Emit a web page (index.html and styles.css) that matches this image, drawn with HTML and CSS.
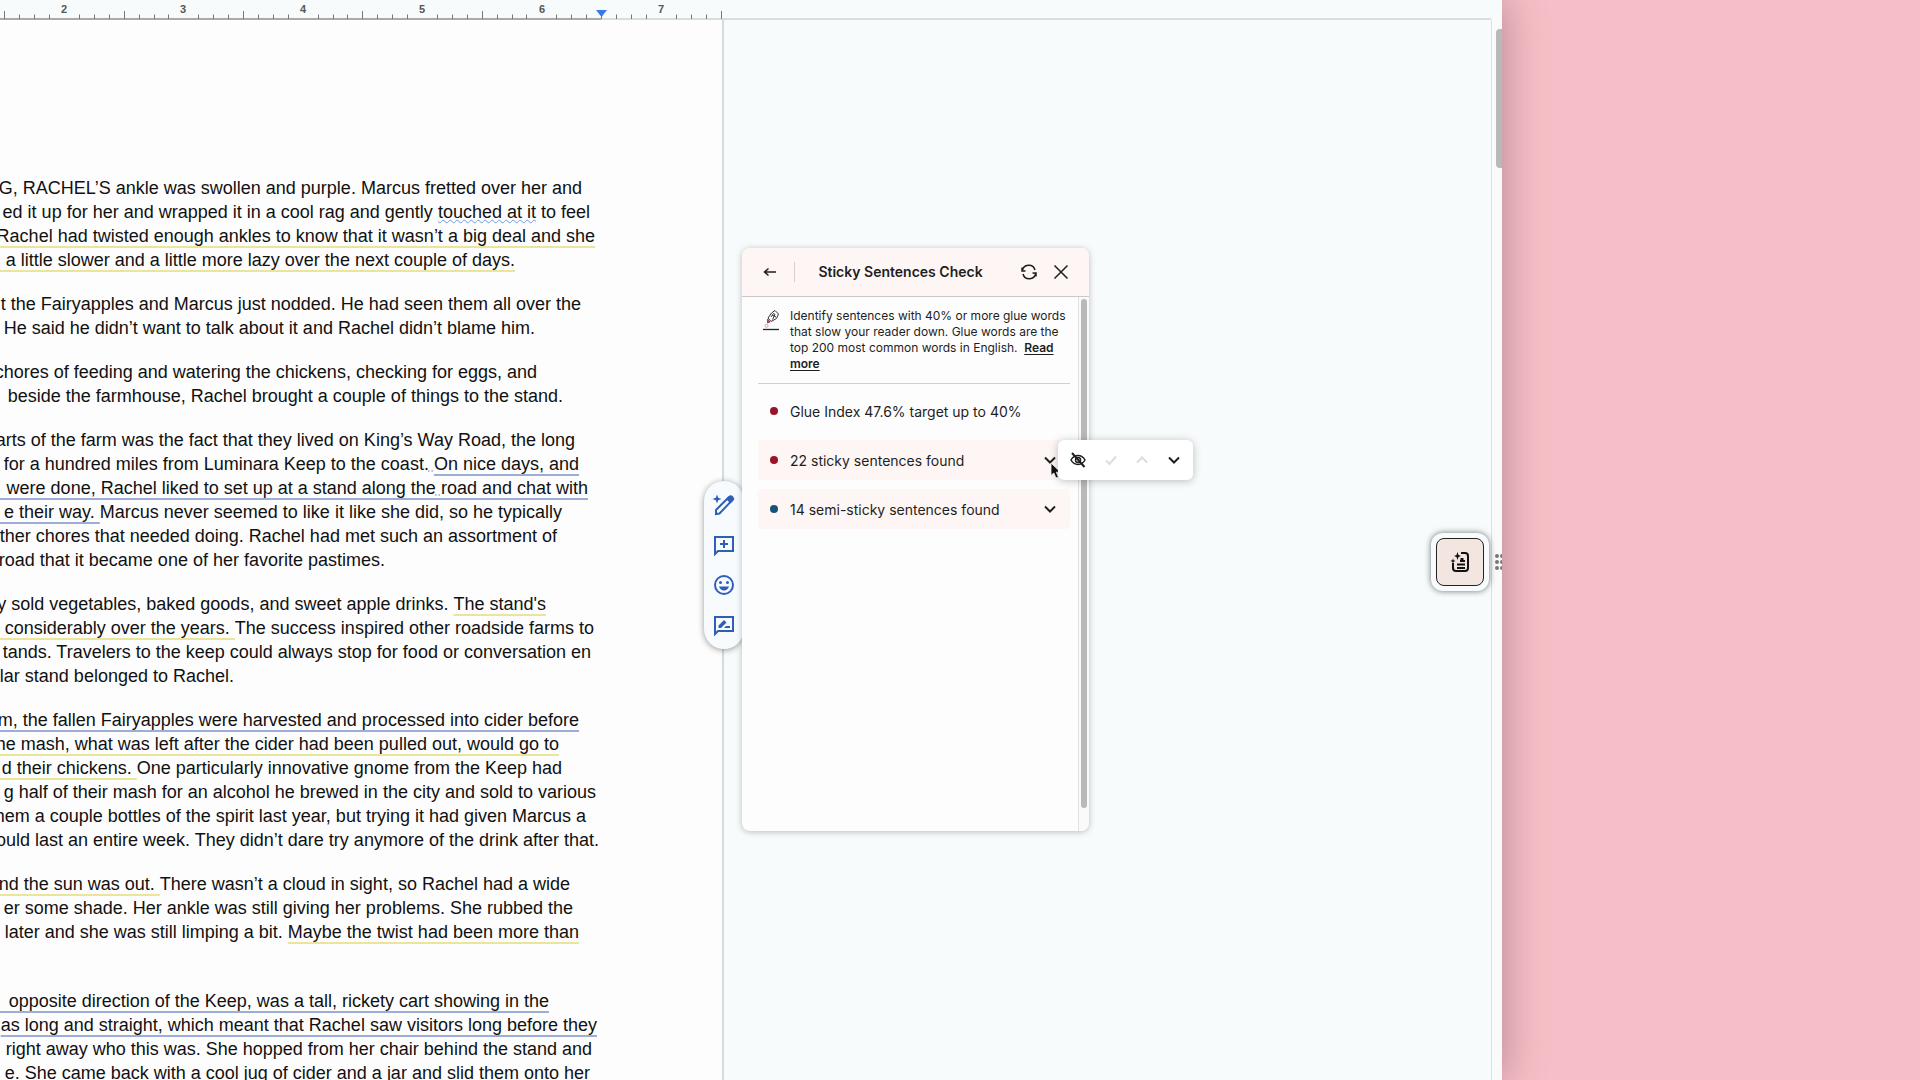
FILE: index.html
```html
<!DOCTYPE html>
<html lang="en">
<head>
<meta charset="utf-8">
<title>Sticky Sentences Check</title>
<link rel="stylesheet" href="styles.css">
</head>
<body>
<div class="window">
  <header class="ruler">
    <svg class="ruler-scale" width="723" height="20" viewBox="0 0 723 20" aria-hidden="true">
      <path class="ruler-text-area" d="M0 19H601"/>
      <path class="ruler-ticks" d="M4.500 11V19M124.500 11V19M243.500 11V19M362.500 11V19M482.500 11V19M601.500 14V19M721.500 11V19"/>
      <path class="ruler-ticks" d="M19.500 14.500V19M34.500 14.500V19M49.500 14.500V19M79.500 14.500V19M94.500 14.500V19M109.500 14.500V19M139.500 14.500V19M154.500 14.500V19M168.500 14.500V19M198.500 14.500V19M213.500 14.500V19M228.500 14.500V19M258.500 14.500V19M273.500 14.500V19M288.500 14.500V19M318.500 14.500V19M333.500 14.500V19M347.500 14.500V19M377.500 14.500V19M392.500 14.500V19M407.500 14.500V19M437.500 14.500V19M452.500 14.500V19M467.500 14.500V19M497.500 14.500V19M512.500 14.500V19M526.500 14.500V19M556.500 14.500V19M571.500 14.500V19M586.500 14.500V19M616.500 14.500V19M631.500 14.500V19M646.500 14.500V19M676.500 14.500V19M691.500 14.500V19M706.500 14.500V19"/>
      <g class="ruler-numbers">
        <text x="64" y="13">2</text><text x="183" y="13">3</text><text x="303" y="13">4</text><text x="422" y="13">5</text><text x="542" y="13">6</text><text x="661" y="13">7</text>
      </g>
      <path class="ruler-marker" d="M596 10H607L601.500 17Z"/>
    </svg>
  </header>
  <div class="workspace">
    <main class="canvas">
      <article class="page">
        <p><span class="line" style="width:585px">G, RACHEL’S ankle was swollen and purple. Marcus fretted over her and</span>
        <span class="line" style="width:593px">ed it up for her and wrapped it in a cool rag and gently <u class="squiggle">touched at it</u> to feel</span>
        <span class="line" style="width:598px"><mark class="sticky"> Rachel had twisted enough ankles to know that it wasn’t a big deal and she</mark></span>
        <span class="line" style="width:518px"><mark class="sticky">  a little slower and a little more lazy over the next couple of days.</mark></span></p>
        <p><span class="line" style="width:584px">t the Fairyapples and Marcus just nodded. He had seen them all over the</span>
        <span class="line" style="width:538px">He said he didn’t want to talk about it and Rachel didn’t blame him.</span></p>
        <p><span class="line" style="width:540px">chores of feeding and watering the chickens, checking for eggs, and</span>
        <span class="line" style="width:566px">beside the farmhouse, Rachel brought a couple of things to the stand.</span></p>
        <p><span class="line" style="width:578px">arts of the farm was the fact that they lived on King’s Way Road, the long</span>
        <span class="line" style="width:582px">for a hundred miles from Luminara Keep to the coast.<span class="hint"> </span><mark class="semi">On nice days, and</mark></span>
        <span class="line" style="width:591px"><mark class="semi">  were done, Rachel liked to set up at a stand along the<span class="hint"> </span>road and chat with</mark></span>
        <span class="line" style="width:565px"><mark class="semi"> e their way. </mark>Marcus never seemed to like it like she did, so he typically</span>
        <span class="line" style="width:560px">ther chores that needed doing. Rachel had met such an assortment of</span>
        <span class="line" style="width:388px">road that it became one of her favorite pastimes.</span></p>
        <p><span class="line" style="width:549px">y sold vegetables, baked goods, and sweet apple drinks. <mark class="sticky">The stand's</mark></span>
        <span class="line" style="width:597px"><mark class="sticky">  considerably over the years. </mark>The success inspired other roadside farms to</span>
        <span class="line" style="width:594px">tands. Travelers to the keep could always stop for food or conversation en</span>
        <span class="line" style="width:237px">lar stand belonged to Rachel.</span></p>
        <p><span class="line" style="width:582px"><mark class="semi">m, the fallen Fairyapples were harvested and processed into cider before</mark></span>
        <span class="line" style="width:562px"><mark class="sticky">he mash, what was left after the cider had been pulled out, would go to</mark></span>
        <span class="line" style="width:565px"><mark class="sticky"> d their chickens. </mark>One particularly innovative gnome from the Keep had</span>
        <span class="line" style="width:599px">g half of their mash for an alcohol he brewed in the city and sold to various</span>
        <span class="line" style="width:589px">hem a couple bottles of the spirit last year, but trying it had given Marcus a</span>
        <span class="line" style="width:602px">ould last an entire week. They didn’t dare try anymore of the drink after that.</span></p>
        <p class="runs-on"><span class="line" style="width:573px"><mark class="sticky">nd the sun was out. </mark>There wasn’t a cloud in sight, so Rachel had a wide</span>
        <span class="line" style="width:576px">er some shade. Her ankle was still giving her problems. She rubbed the</span>
        <span class="line" style="width:582px">later and she was still limping a bit. <mark class="sticky">Maybe the twist had been more than</mark></span></p>
        <p><span class="line" style="width:552px"><mark class="semi">  opposite direction of the Keep, was a tall, rickety cart showing in the</mark></span>
        <span class="line" style="width:600px"><mark class="semi">as long and straight, which meant that Rachel saw visitors long before they</mark></span>
        <span class="line" style="width:595px">right away who this was. She hopped from her chair behind the stand and</span>
        <span class="line" style="width:593px">e. She came back with a cool jug of cider and a jar and slid them onto her</span></p>
      </article>
    </main>
    <div class="gutter"><div class="gutter-thumb"></div></div>
  </div>

  <nav class="quick-tools" aria-label="Page tools">
    <button type="button" aria-label="Help me write"><svg width="24" height="24" viewBox="0 0 24 24"><path d="M5 1.500 6.200 4.800 9.500 6 6.200 7.200 5 10.500 3.800 7.200.500 6 3.800 4.800Z" fill="currentColor"/><path d="M4 21v-4L16.500 4.500q1.500-1.200 3 0t.200 3.200L7.500 20.500Z" fill="none" stroke="currentColor" stroke-width="2"/><path d="m14 6 3-3q2-1.500 4 .500t.500 4l-3 3Z" fill="currentColor"/></svg></button>
    <button type="button" aria-label="Add comment"><svg width="24" height="24" viewBox="0 0 24 24"><path d="M3 21V4h18v14H6Z" fill="none" stroke="currentColor" stroke-width="2"/><path d="M12 7v8M8 11h8" stroke="currentColor" stroke-width="2"/></svg></button>
    <button type="button" aria-label="Add emoji reaction"><svg width="24" height="24" viewBox="0 0 24 24"><circle cx="12" cy="12" r="9" fill="none" stroke="currentColor" stroke-width="2"/><circle cx="8.500" cy="9.500" r="1.500" fill="currentColor"/><circle cx="15.500" cy="9.500" r="1.500" fill="currentColor"/><path d="M7 13.500h10q-1.500 4-5 4t-5-4Z" fill="currentColor"/></svg></button>
    <button type="button" aria-label="Suggest edits"><svg width="24" height="24" viewBox="0 0 24 24"><path d="M3 21V4h18v14H6Z" fill="none" stroke="currentColor" stroke-width="2"/><path d="M6.500 15v-2.500l5.500-5.500 2.500 2.500L9 15ZM12 15l2-2h4v2Z" fill="currentColor"/></svg></button>
  </nav>

  <section class="panel" aria-label="Sticky Sentences Check">
    <header class="panel-head">
      <button type="button" aria-label="Back"><svg width="16" height="16" viewBox="0 0 16 16"><path d="M14 8H3M6.500 4.500 2.500 8l4 3.500" class="stroke"/></svg></button>
      <h1>Sticky Sentences Check</h1>
      <button type="button" aria-label="Refresh"><svg width="18" height="18" viewBox="0 0 18 18"><path d="M2 4.500V8h3.500M2.300 7.800A6.500 6.500 0 0 1 15 7M16 13.500V10h-3.500M15.700 10.200A6.500 6.500 0 0 1 3 11" class="stroke"/></svg></button>
      <button type="button" aria-label="Close"><svg width="18" height="18" viewBox="0 0 18 18"><path d="M2.500 2.500 15.500 15.500M15.500 2.500 2.500 15.500" class="stroke"/></svg></button>
    </header>
    <div class="panel-body">
      <div class="panel-content">
        <div class="intro">
          <svg width="18" height="22" viewBox="0 0 18 22" aria-hidden="true"><path d="M1 20.500H17" stroke="#222" stroke-width="1.300"/><path d="M6 9 9.500 4 13 1.500 16.500 5 14.500 9.500 9 12.500Z" fill="none" stroke="#333"/><path d="m9 8 2.500-3.500 1.500 1-2.500 5M10 6l4 2" fill="none" stroke="#333"/><path d="m5.500 10 2.500 3-2.500 1Z" fill="#a3455a" stroke="#a3455a"/><circle cx="4.500" cy="16.800" r="1.500" fill="none" stroke="#e09aa8"/></svg>
          <p>Identify sentences with 40% or more glue words that slow your reader down. Glue words are the top 200 most common words in English.&nbsp; <a href="#more">Read more</a></p>
        </div>
        <ul class="results">
          <li><i class="dot"></i>Glue Index 47.6% target up to 40%</li>
          <li><button type="button" class="result"><i class="dot"></i><span>22 sticky sentences found</span><svg width="16" height="16" viewBox="0 0 16 16"><path d="m3 5.500 5 5 5-5" class="stroke bold"/></svg></button></li>
          <li><button type="button" class="result"><i class="dot blue"></i><span>14 semi-sticky sentences found</span><svg width="16" height="16" viewBox="0 0 16 16"><path d="m3 5.500 5 5 5-5" class="stroke bold"/></svg></button></li>
        </ul>
      </div>
      <div class="panel-gutter"><div class="panel-thumb"></div></div>
    </div>
  </section>

  <svg class="pointer" width="12" height="18" viewBox="0 0 12 18" aria-hidden="true"><path d="M1 1v12.500l2.800-2.500 2.200 5 2.400-1L6.300 10.200H10.500Z" fill="#111" stroke="#fff" stroke-width=".8"/></svg>

  <div class="stepper" role="toolbar" aria-label="Result navigation">
    <button type="button" aria-label="Hide"><svg width="18" height="18" viewBox="0 0 18 18"><path d="M2 9q2.500-4.500 7-4.500T16 9q-2.500 4.500-7 4.500T2 9Z" class="stroke"/><circle cx="9" cy="9" r="2.500" class="stroke"/><path d="m3 2 12.500 14" class="stroke bold"/></svg></button>
    <button type="button" aria-label="Accept" disabled><svg width="16" height="16" viewBox="0 0 16 16"><path d="m3 8.500 3.500 3.500L13 4.500" class="stroke bold"/></svg></button>
    <button type="button" aria-label="Previous" disabled><svg width="16" height="16" viewBox="0 0 16 16"><path d="m3 10.500 5-5 5 5" class="stroke bold"/></svg></button>
    <button type="button" aria-label="Next"><svg width="16" height="16" viewBox="0 0 16 16"><path d="m3 5.500 5 5 5-5" class="stroke bold"/></svg></button>
  </div>

  <div class="launcher">
    <button type="button" aria-label="Open writing reports"><svg width="20" height="22" viewBox="0 0 20 22"><path d="M11 2h4q3 0 3 3v12q0 3-3 3H6q-3 0-3-3v-5M7 17h8M7 13.500h8M10 10h5" fill="none" stroke="#111" stroke-width="2"/><path d="M7.500 1 8.500 4 11 5 8.500 6 7.500 9 6.500 6 4 5 6.500 4ZM3 7.500l.700 1.800 1.800.700-1.800.700L3 12.500l-.700-1.800L.500 10l1.800-.700ZM10.500 7h3v2h-3Z" fill="#111"/></svg></button>
  </div>
  <svg class="grip" width="8" height="16" viewBox="0 0 8 16" aria-hidden="true"><g fill="#777"><circle cx="3" cy="2" r="2"/><circle cx="3" cy="8" r="2"/><circle cx="3" cy="14" r="2"/><circle cx="8" cy="2" r="2"/><circle cx="8" cy="8" r="2"/><circle cx="8" cy="14" r="2"/></g></svg>
</div>
</body>
</html>
```
FILE: styles.css
```css
* { box-sizing: border-box; }

body {
  margin: 0;
  height: 100vh;
  padding-right: 418px;
  overflow: hidden;
  background: #f6bec6;
  color: #1e1e1e;
  font-family: Inter, "Liberation Sans", sans-serif;
}

button {
  display: flex;
  align-items: center;
  justify-content: center;
  padding: 0;
  border: 0;
  background: none;
  color: inherit;
  font: inherit;
}

.window {
  position: relative;
  display: flex;
  flex-direction: column;
  height: 100%;
  background: #f7fbfc;
  box-shadow: 0 0 40px rgba(60, 30, 40, .35);
}

/* Ruler */
.ruler {
  height: 20px;
  margin-right: 11px;
  border-bottom: 2px solid #d9dddd;
}
.ruler-scale { display: block; }
.ruler-ticks { stroke: #777; fill: none; }
.ruler-text-area { stroke: #aaa; stroke-width: 2; }
.ruler-numbers {
  fill: #555;
  font: 700 11px "Liberation Sans", sans-serif;
  text-anchor: middle;
}
.ruler-marker { fill: #3b78e7; }

/* Document */
.workspace { display: flex; flex: 1; min-height: 0; }
.canvas {
  flex: 1;
  overflow: hidden;
  border-right: 1px solid #dcdfe3;
}
.page {
  width: 724px;
  min-height: 100%;
  padding-top: 156px;
  border-right: 2px solid #d7dadc;
  background: #fdfdfd;
  color: #111;
  font: 18px/24px "Liberation Sans", Arial, sans-serif;
}
.page p { margin: 0 0 20px -3px; }
.page .runs-on { padding-bottom: 25px; }
.line {
  display: flex;
  justify-content: flex-end;
  white-space: pre;
}
mark {
  background: none;
  color: inherit;
  text-decoration: underline 2px;
  text-decoration-skip-ink: none;
  text-underline-offset: 4px;
}
.sticky { text-decoration-color: #ebe59b; }
.semi { text-decoration-color: #9cadd8; }
.squiggle {
  text-decoration: underline wavy 1px #6f9ae0;
  text-decoration-skip-ink: none;
}
.hint {
  text-decoration: underline dotted 2px #b5c4e6;
  text-underline-offset: 0;
}

.gutter {
  display: flex;
  justify-content: flex-end;
  width: 10px;
  padding-top: 9px;
  background: #fafafa;
}
.gutter-thumb {
  width: 6px;
  height: 139px;
  border-radius: 4px 0 0 4px;
  background: #b9b9b9;
}

/* Floating page tools */
.quick-tools {
  position: absolute;
  left: 704px;
  top: 481px;
  display: flex;
  flex-direction: column;
  gap: 16px;
  padding: 12px 8px;
  border-radius: 20px;
  background: #f8fbfd;
  color: #2f5fb8;
  box-shadow: 0 1px 6px rgba(0, 0, 0, .4);
}

/* Check panel */
.panel {
  position: absolute;
  left: 742px;
  top: 248px;
  display: flex;
  flex-direction: column;
  width: 347px;
  height: 583px;
  overflow: hidden;
  border-radius: 8px;
  background: #fdfdfd;
  box-shadow: 0 1px 6px rgba(0, 0, 0, .25);
}
.stroke { fill: none; stroke: currentColor; stroke-width: 1.5; }
.bold { stroke-width: 2; }
.panel-head {
  display: flex;
  align-items: center;
  height: 49px;
  padding: 0 19px 0 20px;
  gap: 14px;
  border-bottom: 1px solid #ccc6c5;
  background: #fdf6f4;
}
.panel-head h1 {
  flex: 1;
  margin: 0 0 0 2px;
  border-left: 1px solid #d6cfce;
  font-size: 14px;
  line-height: 20px;
  font-weight: 600;
  text-align: center;
}
.panel-body { display: flex; flex: 1; }
.panel-content { flex: 1; padding: 11px 8px 0 16px; }
.intro {
  display: flex;
  gap: 10px;
  padding: 0 0 11px 4px;
  border-bottom: 1px solid #d0d0d0;
}
.intro svg { flex: none; margin-top: 1px; }
.intro p { margin: 0; font-size: 12px; line-height: 16px; }
.intro a { color: inherit; font-weight: 600; text-underline-offset: 2px; }
.results {
  display: flex;
  flex-direction: column;
  gap: 9px;
  margin: 7px 0 0;
  padding: 0;
  list-style: none;
  font-size: 14px;
}
.results li, .result {
  display: flex;
  align-items: center;
  width: 100%;
  height: 40px;
}
.result { padding-right: 12px; border-radius: 4px; background: #fdf6f4; }
.result span { flex: 1; text-align: left; }
.dot {
  flex: none;
  width: 8px;
  height: 8px;
  margin: 0 12px;
  border-radius: 50%;
  background: #981426;
}
.blue { background: #165379; }
.panel-gutter {
  width: 11px;
  padding: 2px 2px 23px;
  border-left: 1px solid #e2e2e2;
  background: #fafafa;
}
.panel-thumb { height: 100%; border-radius: 4px; background: #b9b9b9; }

.pointer { position: absolute; left: 1050px; top: 462px; }

/* Result navigation popover */
.stepper {
  position: absolute;
  left: 1058px;
  top: 440px;
  display: flex;
  align-items: center;
  justify-content: space-between;
  width: 135px;
  height: 40px;
  padding: 0 11px;
  border-radius: 6px;
  background: #fff;
  box-shadow: 0 1px 8px rgba(0, 0, 0, .25);
}
.stepper button:disabled { color: #ddd; }

/* Launcher */
.launcher {
  position: absolute;
  right: 13px;
  top: 533px;
  padding: 5px;
  border-radius: 12px;
  background: #f7fbfc;
  box-shadow: 0 0 6px rgba(0, 0, 0, .55);
}
.launcher button {
  width: 48px;
  height: 48px;
  border: 1px solid #222;
  border-radius: 8px;
  background: #f3e6e0;
}
.grip { position: absolute; right: 0; top: 554px; }
```
